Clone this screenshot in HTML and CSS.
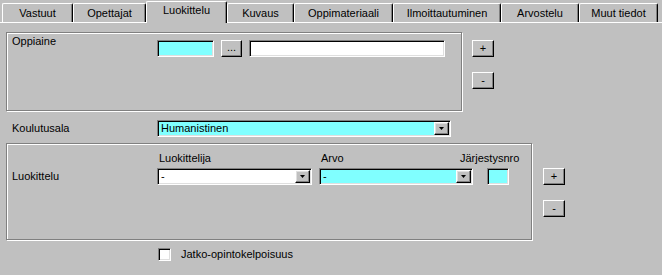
FILE: index.html
```html
<!DOCTYPE html>
<html lang="fi">
<head>
<meta charset="utf-8">
<title>Luokittelu</title>
<link rel="stylesheet" href="styles.css">
</head>
<body>
<div class="tabs">
  <div class="tab w-vastuut">Vastuut</div>
  <div class="tab w-opettajat">Opettajat</div>
  <div class="tab active w-luokittelu">Luokittelu</div>
  <div class="tab w-kuvaus">Kuvaus</div>
  <div class="tab w-oppimat">Oppimateriaali</div>
  <div class="tab w-ilmo">Ilmoittautuminen</div>
  <div class="tab w-arvostelu">Arvostelu</div>
  <div class="tab w-muut">Muut tiedot</div>
</div>

<div class="panel">
  <div class="row">
    <div class="group g1">
      <div class="label lbl-col">Oppiaine</div>
      <div class="edit cyan e-oppiaine"></div>
      <div class="btn b-dots">...</div>
      <div class="edit white e-name"></div>
    </div>
    <div class="side side1">
      <div class="btn b-pm">+</div>
      <div class="btn b-pm">-</div>
    </div>
  </div>

  <div class="row-koulutus">
    <div class="label lbl-col">Koulutusala</div>
    <div class="combo cyan c-koulutus">
      <span class="combo-text">Humanistinen</span>
      <span class="dd"><svg width="5" height="3" viewBox="0 0 5 3"><polygon points="0,0 5,0 2.5,3" fill="#000"/></svg></span>
    </div>
  </div>

  <div class="row row2">
    <div class="group g2">
      <div class="labels">
        <div class="label l-luokittelija">Luokittelija</div>
        <div class="label l-arvo">Arvo</div>
        <div class="label l-jarj">Järjestysnro</div>
      </div>
      <div class="controls">
        <div class="label lbl-col">Luokittelu</div>
        <div class="combo white c-luok">
          <span class="combo-text">-</span>
          <span class="dd"><svg width="5" height="3" viewBox="0 0 5 3"><polygon points="0,0 5,0 2.5,3" fill="#000"/></svg></span>
        </div>
        <div class="combo cyan c-arvo">
          <span class="combo-text">-</span>
          <span class="dd"><svg width="5" height="3" viewBox="0 0 5 3"><polygon points="0,0 5,0 2.5,3" fill="#000"/></svg></span>
        </div>
        <div class="edit cyan e-jarj"></div>
      </div>
    </div>
    <div class="side side2">
      <div class="btn b-pm">+</div>
      <div class="btn b-pm">-</div>
    </div>
  </div>

  <div class="row-check">
    <div class="checkbox"></div>
    <div class="label check-label">Jatko-opintokelpoisuus</div>
  </div>
</div>
</body>
</html>
```

FILE: styles.css
```css
html, body {
  margin: 0;
  padding: 0;
}
body {
  background: #c0c0c0;
  font-family: "Liberation Sans", Arial, sans-serif;
  font-size: 11px;
  color: #000;
  width: 662px;
  height: 275px;
  overflow: hidden;
}

/* Tabs */
.tabs {
  display: flex;
  align-items: flex-end;
  height: 22px;
  padding-left: 2px;
  border-bottom: 1px solid #fff;
}
.tab {
  box-sizing: border-box;
  height: 19px;
  border-top: 1px solid #fff;
  border-left: 1px solid #fff;
  border-right: 1px solid #000;
  box-shadow: inset -1px 0 0 #808080;
  border-radius: 2px 2px 0 0;
  display: flex;
  align-items: center;
  justify-content: center;
  line-height: 13px;
  white-space: nowrap;
}
.tab.active {
  height: 22px;
  margin-bottom: -1px;
  background: #c0c0c0;
  padding-bottom: 4px;
  position: relative;
  z-index: 1;
}
.w-vastuut { width: 71px; }
.w-opettajat { width: 73px; }
.w-luokittelu { width: 81px; }
.w-kuvaus { width: 67px; }
.w-oppimat { width: 99px; }
.w-ilmo { width: 108px; }
.w-arvostelu { width: 78px; }
.w-muut { width: 79px; }

/* Panel */
.panel {
  padding: 9px 0 0 6px;
}
.row {
  display: flex;
  align-items: flex-start;
}
.group {
  box-sizing: border-box;
  border: 1px solid #808080;
  box-shadow: inset 1px 1px 0 #fff, 1px 1px 0 #fff;
}
.label {
  line-height: 13px;
  white-space: nowrap;
}
.lbl-col {
  width: 145px;
  flex: none;
}

.g1 {
  width: 456px;
  height: 79px;
  padding: 1px 0 0 5px;
  display: flex;
  align-items: flex-start;
}
.g1 .lbl-col {
  margin-top: 1px;
}
.edit {
  box-sizing: border-box;
  height: 17px;
  border: 1px solid;
  border-color: #808080 #fff #fff #808080;
  box-shadow: inset 1px 1px 0 #000, inset -1px -1px 0 #dfdfdf;
  flex: none;
}
.cyan { background: #80ffff; }
.white { background: #fff; }
.e-oppiaine {
  width: 57px;
  margin-top: 6px;
}
.b-dots {
  width: 21px;
  margin-top: 6px;
  margin-left: 7px;
  align-items: flex-end;
  padding-bottom: 3px;
  line-height: 8px;
}
.e-name {
  width: 196px;
  margin-top: 6px;
  margin-left: 7px;
}

.btn {
  box-sizing: border-box;
  height: 17px;
  border: 1px solid;
  border-color: #fff #000 #000 #fff;
  box-shadow: inset -1px -1px 0 #808080;
  background: #c0c0c0;
  display: flex;
  align-items: center;
  justify-content: center;
  flex: none;
  line-height: 13px;
}
.b-pm {
  width: 22px;
}
.side {
  display: flex;
  flex-direction: column;
  gap: 15px;
}
.side1 {
  margin-left: 10px;
  padding-top: 8px;
}
.side2 {
  margin-left: 11px;
  padding-top: 25px;
}

/* Koulutusala */
.row-koulutus {
  display: flex;
  align-items: center;
  margin-top: 9px;
  padding-left: 6px;
}
.row-koulutus .lbl-col {
  margin-top: -1px;
}
.combo {
  box-sizing: border-box;
  height: 17px;
  border: 1px solid;
  border-color: #808080 #fff #fff #808080;
  box-shadow: inset 1px 1px 0 #000, inset -1px -1px 0 #dfdfdf;
  display: flex;
  align-items: center;
  padding: 1px 1px 1px 3px;
  flex: none;
}
.combo-text {
  flex: 1;
  line-height: 13px;
}
.dd {
  box-sizing: border-box;
  width: 15px;
  height: 13px;
  border: 1px solid;
  border-color: #fff #000 #000 #fff;
  box-shadow: inset -1px -1px 0 #808080, inset 1px 1px 0 #dfdfdf;
  background: #c0c0c0;
  display: flex;
  align-items: center;
  justify-content: center;
}
.dd svg {
  display: block;
}
.c-koulutus { width: 294px; }

/* Luokittelu group */
.row2 {
  margin-top: 6px;
}
.g2 {
  width: 526px;
  height: 97px;
  padding: 8px 0 0 5px;
  display: flex;
  flex-direction: column;
}
.labels {
  display: flex;
  height: 13px;
}
.l-luokittelija {
  margin-left: 147px;
  width: 162px;
}
.l-arvo {
  width: 139px;
}
.controls {
  display: flex;
  align-items: center;
  margin-top: 3px;
}
.c-luok { width: 155px; }
.c-arvo { width: 154px; margin-left: 7px; }
.e-jarj {
  width: 22px;
  margin-left: 14px;
}

/* Checkbox */
.row-check {
  display: flex;
  align-items: center;
  margin-top: 8px;
  padding-left: 152px;
}
.checkbox {
  box-sizing: border-box;
  width: 13px;
  height: 13px;
  background: #fff;
  border: 1px solid;
  border-color: #808080 #fff #fff #808080;
  box-shadow: inset 1px 1px 0 #000, inset -1px -1px 0 #dfdfdf;
}
.check-label {
  margin-left: 10px;
}
```
